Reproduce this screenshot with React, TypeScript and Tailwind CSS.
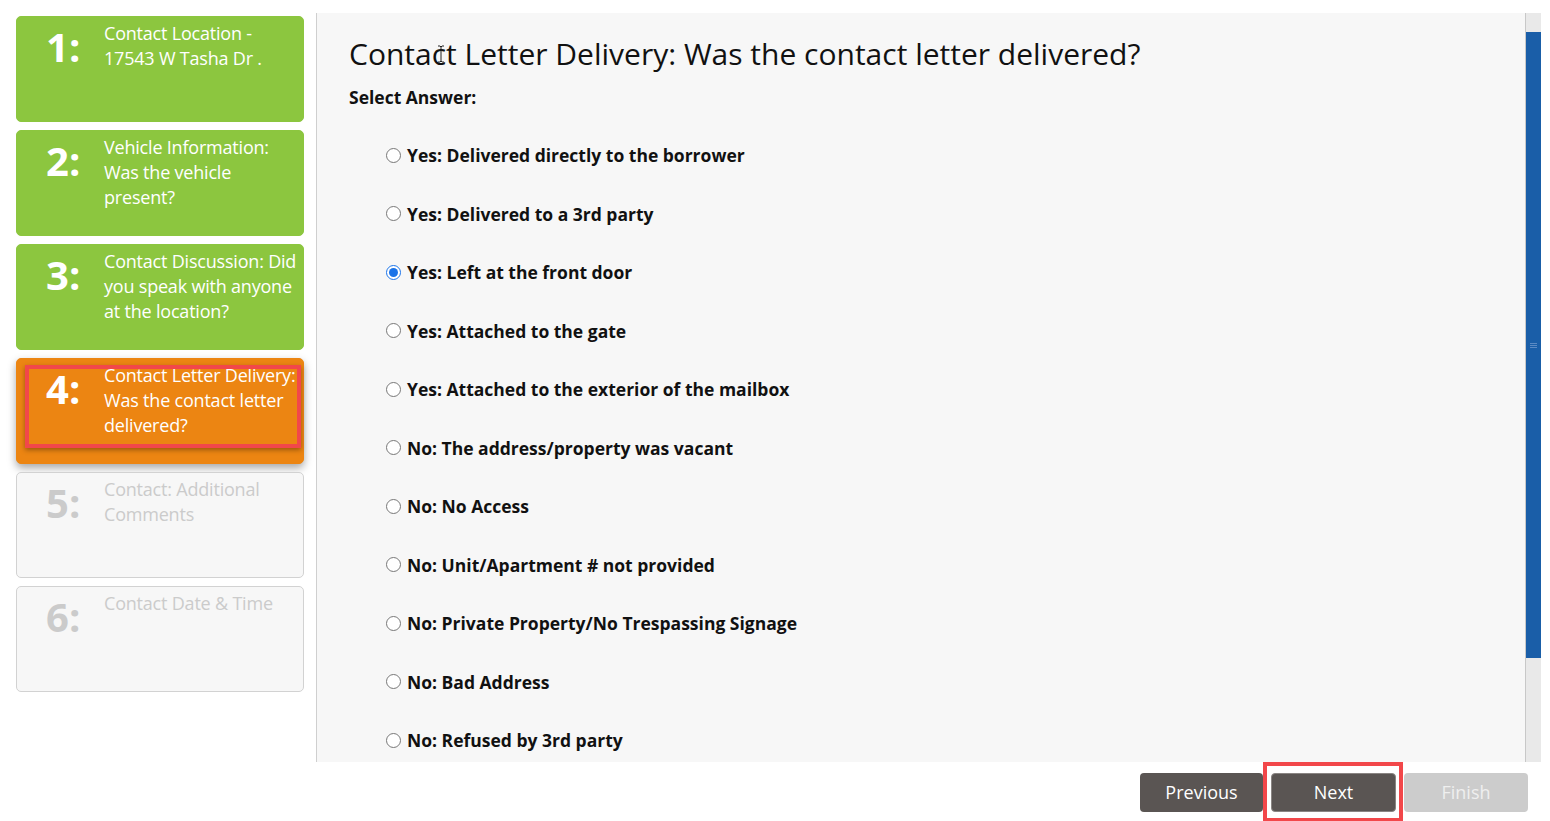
import React from "react";

type Step = {
  num: number;
  label: string;
  state: "done" | "current" | "todo";
};

const steps: Step[] = [
  { num: 1, label: "Contact Location - 17543 W Tasha Dr .", state: "done" },
  { num: 2, label: "Vehicle Information: Was the vehicle present?", state: "done" },
  { num: 3, label: "Contact Discussion: Did you speak with anyone at the location?", state: "done" },
  { num: 4, label: "Contact Letter Delivery: Was the contact letter delivered?", state: "current" },
  { num: 5, label: "Contact: Additional Comments", state: "todo" },
  { num: 6, label: "Contact Date & Time", state: "todo" },
];

const answers = [
  "Yes: Delivered directly to the borrower",
  "Yes: Delivered to a 3rd party",
  "Yes: Left at the front door",
  "Yes: Attached to the gate",
  "Yes: Attached to the exterior of the mailbox",
  "No: The address/property was vacant",
  "No: No Access",
  "No: Unit/Apartment # not provided",
  "No: Private Property/No Trespassing Signage",
  "No: Bad Address",
  "No: Refused by 3rd party",
];

const StepCard = ({ step }: { step: Step }) => {
  const look =
    step.state === "done"
      ? "bg-[#8cc63f] border-[#8cc63f] text-white"
      : step.state === "current"
      ? "bg-[#ec8512] border-[#ec8512] text-white shadow-[0_4px_8px_rgba(0,0,0,0.35)]"
      : "bg-[#f7f7f7] border-[#d2d2d2] text-[#cbcbcb]";
  return (
    <div className={`relative flex h-[106px] w-[288px] rounded-[5px] border ${look}`}>
      <div className="w-[87px] shrink-0 pl-[29px] pt-[10px] text-[40px] font-bold leading-[40px]">
        {step.num}:
      </div>
      <div className="pt-[4px] pr-1 text-[18px] leading-[25px] tracking-[-0.2px]">
        {step.label}
      </div>
      {step.state === "current" && (
        <div className="absolute left-[8px] top-[6px] h-[83px] w-[276px] border-4 border-[#f2474a] shadow-[0_2px_5px_rgba(0,0,0,0.35)]" />
      )}
    </div>
  );
};

export default function App() {
  const [picked, setPicked] = React.useState(2);

  return (
    <div
      className="flex h-[821px] w-[1550px] flex-col overflow-hidden bg-white text-[#111]"
      style={{ fontFamily: '"Open Sans", "Liberation Sans", sans-serif' }}
    >
      <div className="flex pt-[13px]">
        <div className="flex w-[316px] shrink-0 flex-col gap-2 pl-4 pt-[3px]">
          {steps.map((s) => (
            <StepCard key={s.num} step={s} />
          ))}
        </div>

        <div className="mr-[9px] flex h-[749px] flex-1 border-l border-[#cfcfcf] bg-[#f7f7f7]">
          <div className="relative flex-1 overflow-hidden pl-[32px] pt-[21px]">
            <h1 className="text-[30px] leading-[40px] font-normal text-[#111]">
              Contact Letter Delivery: Was the contact letter delivered?
            </h1>
            <svg
              className="absolute left-[120px] top-[32px]"
              width="8"
              height="18"
              viewBox="0 0 8 18"
            >
              <path
                d="M1 1h2l1 1 1-1h2M4 2v14M1 17h2l1-1 1 1h2"
                fill="none"
                stroke="#222"
                strokeWidth="1"
              />
            </svg>
            <div className="mt-[11px] text-[17.5px] font-bold leading-[24px]">
              Select Answer:
            </div>
            <div className="mt-[17px] flex flex-col pl-[37px]">
              {answers.map((a, i) => (
                <label
                  key={a}
                  className="flex h-[58.5px] items-center gap-[6px] text-[17.5px] font-bold leading-[24px]"
                >
                  <input
                    type="radio"
                    name="answer"
                    checked={picked === i}
                    onChange={() => setPicked(i)}
                    className="m-0 h-[15px] w-[15px] accent-[#1a73e8]"
                  />
                  <span>{a}</span>
                </label>
              ))}
            </div>
          </div>

          <div className="flex w-[16px] shrink-0 flex-col border-l border-[#c8c8c8] bg-[#e9e9e9]">
            <div className="mt-[19px] flex h-[626px] items-center justify-center bg-[#1a5ea8]">
              <div className="flex w-[7px] flex-col gap-[1px]">
                <div className="h-[1px] bg-[#5b8ac4]" />
                <div className="h-[1px] bg-[#5b8ac4]" />
                <div className="h-[1px] bg-[#5b8ac4]" />
              </div>
            </div>
          </div>
        </div>
      </div>

      <div className="flex justify-end gap-2 pr-[22px] pt-[11px]">
        <button className="h-[39px] w-[123px] rounded-[4px] bg-[#5a5553] text-[18px] text-white">
          Previous
        </button>
        <div className="relative">
          <button className="h-[39px] w-[125px] rounded-[4px] border border-[#8a8583] bg-[#5a5553] text-[18px] text-white">
            Next
          </button>
          <div className="absolute left-[-8px] right-[-7px] top-[-11px] bottom-[-10px] border-4 border-[#f2474a]" />
        </div>
        <button className="h-[39px] w-[124px] rounded-[4px] bg-[#cccccc] text-[18px] text-[#efefef]">
          Finish
        </button>
      </div>
    </div>
  );
}
